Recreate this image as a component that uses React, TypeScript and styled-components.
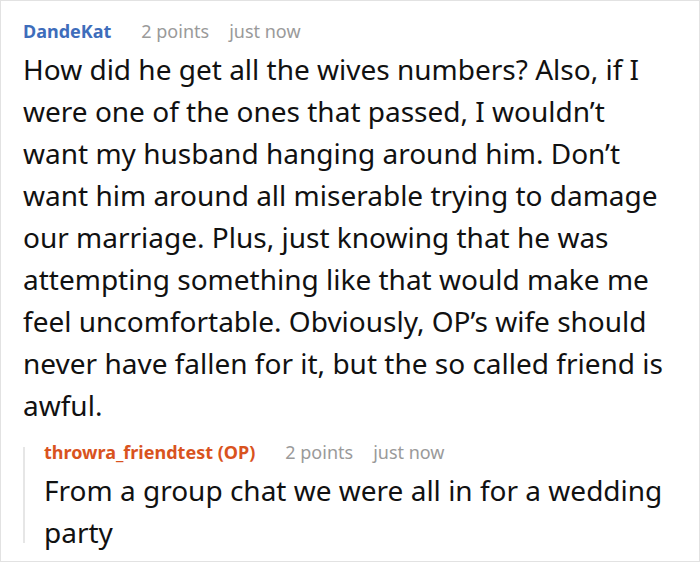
import React from 'react';
import styled, { createGlobalStyle } from 'styled-components';

const GlobalStyle = createGlobalStyle`
  html, body {
    margin: 0;
    padding: 0;
    background: #fff;
  }
  body {
    font-family: 'Noto Sans', 'Open Sans', sans-serif;
  }
`;

const StyledCard = styled.div`
  border: 1px solid #e2e2e2;
  box-sizing: border-box;
  height: 562px;
  overflow: hidden;
  padding: 16px 22px 0;
  width: 700px;
`;

const StyledMeta = styled.div`
  align-items: baseline;
  display: flex;
  font-size: 18px;
  gap: 30px;
  line-height: 28px;
`;

const StyledAuthor = styled.span<{ $op?: boolean }>`
  color: ${({ $op }) => ($op ? '#d9531e' : '#3e6dbb')};
  font-weight: 700;
`;

const StyledInfo = styled.span`
  color: #9a9a9a;
`;

const StyledInfoGroup = styled.span`
  display: flex;
  gap: 20px;
`;

const StyledBody = styled.p`
  color: #111;
  font-size: 28px;
  line-height: 42px;
  margin: 3px 0 0;
`;

const StyledReply = styled.div`
  margin: 12px 0 0;
  padding: 0 0 0 21px;
  position: relative;

  &::before {
    background: #e6e6e6;
    bottom: 10px;
    content: '';
    left: 0;
    position: absolute;
    top: 9px;
    width: 2px;
  }
`;

interface CommentProps {
  author: string;
  op?: boolean;
  points: number;
  time: string;
  text: string;
}

const Comment = ({ author, op, points, time, text }: CommentProps) => (
  <>
    <StyledMeta>
      <StyledAuthor $op={op}>{author}</StyledAuthor>
      <StyledInfoGroup>
        <StyledInfo>{points} points</StyledInfo>
        <StyledInfo>{time}</StyledInfo>
      </StyledInfoGroup>
    </StyledMeta>
    <StyledBody>{text}</StyledBody>
  </>
);

export default function App() {
  return (
    <>
      <GlobalStyle />
      <StyledCard>
        <Comment
          author="DandeKat"
          points={2}
          time="just now"
          text="How did he get all the wives numbers? Also, if I were one of the ones that passed, I wouldn’t want my husband hanging around him. Don’t want him around all miserable trying to damage our marriage. Plus, just knowing that he was attempting something like that would make me feel uncomfortable. Obviously, OP’s wife should never have fallen for it, but the so called friend is awful."
        />
        <StyledReply>
          <Comment
            author="throwra_friendtest (OP)"
            op
            points={2}
            time="just now"
            text="From a group chat we were all in for a wedding party"
          />
        </StyledReply>
      </StyledCard>
    </>
  );
}
